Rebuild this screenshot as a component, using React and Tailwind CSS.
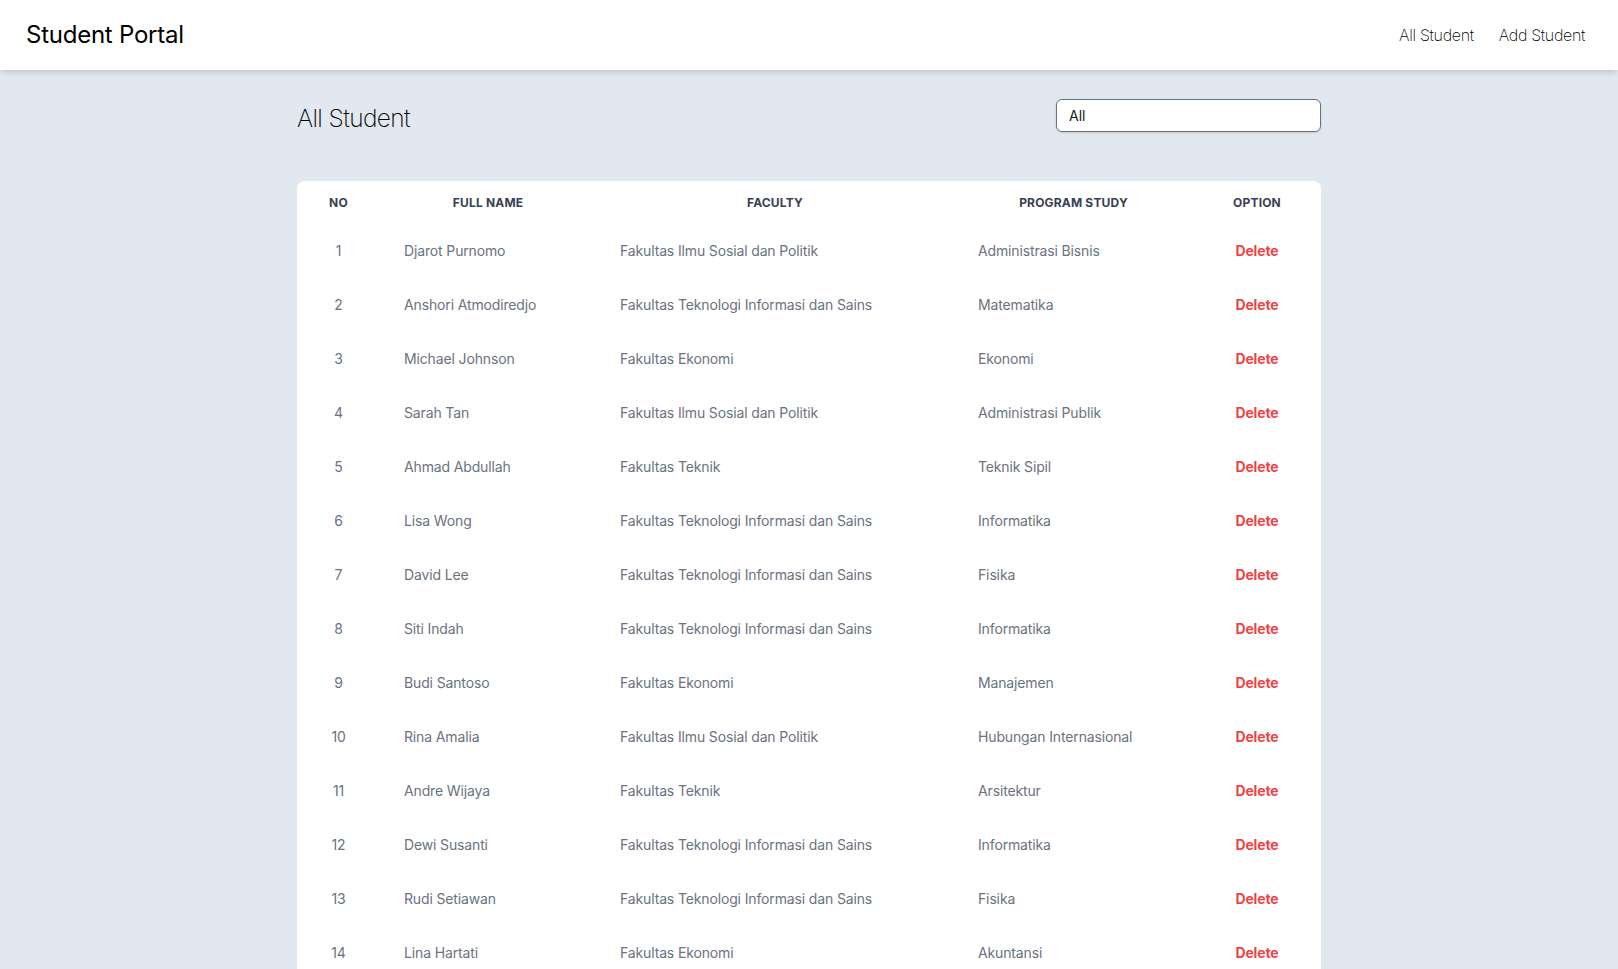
import React from "react";

const students = [
  ["Djarot Purnomo", "Fakultas Ilmu Sosial dan Politik", "Administrasi Bisnis"],
  ["Anshori Atmodiredjo", "Fakultas Teknologi Informasi dan Sains", "Matematika"],
  ["Michael Johnson", "Fakultas Ekonomi", "Ekonomi"],
  ["Sarah Tan", "Fakultas Ilmu Sosial dan Politik", "Administrasi Publik"],
  ["Ahmad Abdullah", "Fakultas Teknik", "Teknik Sipil"],
  ["Lisa Wong", "Fakultas Teknologi Informasi dan Sains", "Informatika"],
  ["David Lee", "Fakultas Teknologi Informasi dan Sains", "Fisika"],
  ["Siti Indah", "Fakultas Teknologi Informasi dan Sains", "Informatika"],
  ["Budi Santoso", "Fakultas Ekonomi", "Manajemen"],
  ["Rina Amalia", "Fakultas Ilmu Sosial dan Politik", "Hubungan Internasional"],
  ["Andre Wijaya", "Fakultas Teknik", "Arsitektur"],
  ["Dewi Susanti", "Fakultas Teknologi Informasi dan Sains", "Informatika"],
  ["Rudi Setiawan", "Fakultas Teknologi Informasi dan Sains", "Fisika"],
  ["Lina Hartati", "Fakultas Ekonomi", "Akuntansi"],
  ["Agus Prasetyo", "Fakultas Teknik", "Teknik Elektro"],
  ["Maya Sari", "Fakultas Ilmu Sosial dan Politik", "Ilmu Komunikasi"],
];

export default function App() {
  return (
    <div className="min-h-screen bg-[#e2e8f0]" style={{ fontFamily: "Inter, 'Noto Sans', sans-serif" }}>
      <header className="h-[70px] bg-white shadow-md flex items-center justify-between pl-[26px] pr-[33px] relative z-10">
        <h1 className="text-2xl text-black font-normal tracking-[-0.01em]">Student Portal</h1>
        <nav className="flex items-center gap-[25px] text-base font-extralight text-black tracking-[-0.02em]">
          <a href="#">All Student</a>
          <a href="#">Add Student</a>
        </nav>
      </header>
      <main className="max-w-5xl mx-auto pt-[29px] pb-10">
        <div className="flex items-center justify-between h-[33px]">
          <h2 className="text-[24.5px] font-extralight text-black tracking-tight mt-[5px]">All Student</h2>
          <select className="appearance-none w-[265px] h-[33px] rounded-md border border-gray-500 bg-white pl-3 text-sm text-gray-900 shadow-sm outline-none">
            <option>All</option>
          </select>
        </div>
        <div className="mt-[49px] bg-white rounded-lg overflow-hidden">
          <table className="w-full table-fixed">
            <colgroup>
              <col className="w-[83px]" />
              <col className="w-[216px]" />
              <col className="w-[358px]" />
              <col className="w-[239px]" />
              <col className="w-[128px]" />
            </colgroup>
            <thead>
              <tr className="h-[43px] text-xs font-bold uppercase tracking-[0.015em] text-[#374151]">
                <th className="px-6 text-center">No</th>
                <th className="px-6 text-center">Full Name</th>
                <th className="px-6 text-center">Faculty</th>
                <th className="px-6 text-center">Program Study</th>
                <th className="px-6 text-center">Option</th>
              </tr>
            </thead>
            <tbody className="text-sm text-[#6b7280] tracking-[-0.01em]">
              {students.map((s, i) => (
                <tr key={i} className="h-[54px]">
                  <td className="px-6 text-center">{i + 1}</td>
                  <td className="px-6 text-left whitespace-nowrap">{s[0]}</td>
                  <td className="px-6 text-left whitespace-nowrap">{s[1]}</td>
                  <td className="px-6 text-left whitespace-nowrap">{s[2]}</td>
                  <td className="px-6 text-center">
                    <button className="font-bold text-[#ef4444]">Delete</button>
                  </td>
                </tr>
              ))}
            </tbody>
          </table>
        </div>
      </main>
    </div>
  );
}
